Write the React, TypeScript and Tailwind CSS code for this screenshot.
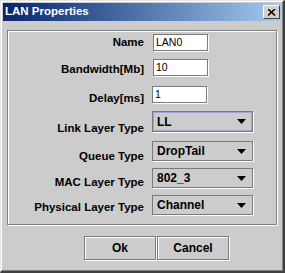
import React from 'react';

const font = { fontFamily: '"Liberation Sans", Arial, sans-serif' };

interface RowProps {
  label: string;
  mt: string;
  labelPt: string;
  children: React.ReactNode;
}

const Row: React.FC<RowProps> = ({ label, mt, labelPt, children }) => (
  <div className={`flex items-start ${mt}`}>
    <div
      className={`w-[136px] shrink-0 text-right text-[11.5px] font-bold leading-[14px] text-black ${labelPt}`}
    >
      {label}
    </div>
    <div className="ml-[9px]">{children}</div>
  </div>
);

const TextField: React.FC<{ value: string; shift?: boolean }> = ({ value, shift }) => (
  <div
    className={`h-[17px] w-[55px] border border-[#7a7a7a] bg-white pl-[2px] text-[10.5px] leading-[15px] text-black shadow-[1px_1px_0_#ffffff] ${
      shift ? '-ml-px' : ''
    }`}
  >
    {value}
  </div>
);

const Combo: React.FC<{ value: string; focused?: boolean; h: string }> = ({
  value,
  focused,
  h,
}) => (
  <div
    className={`${h} w-[101px] border border-[#7a7a7a] bg-[#cccccc] shadow-[1px_1px_0_#ffffff]`}
  >
    <div
      className={`flex h-full items-center justify-between pl-[3px] pr-[5px] ${
        focused ? 'border border-[#a3a3d6]' : 'border border-transparent'
      }`}
    >
      <span className="text-[12px] font-bold leading-[14px] text-black">{value}</span>
      <svg width="9" height="5" viewBox="0 0 9 5">
        <path d="M0 0 H9 L4.5 5 Z" fill="#000" />
      </svg>
    </div>
  </div>
);

const Button: React.FC<{ label: string }> = ({ label }) => (
  <div className="flex h-[24px] w-[72px] items-center justify-center border border-[#7a7a7a] text-[12px] font-bold text-black shadow-[inset_1px_1px_0_#ffffff,1px_1px_0_#ffffff]">
    {label}
  </div>
);

export default function App() {
  return (
    <div
      style={font}
      className="h-[273px] w-[285px] overflow-hidden bg-[#cccccc] border-t border-l border-t-[#e6e6e6] border-l-[#e6e6e6] border-r-2 border-b-2 border-r-[#404040] border-b-[#404040]"
    >
      <div className="h-full w-full border-t border-l border-t-white border-l-white border-r border-b border-r-[#808080] border-b-[#808080] px-px pt-px">
        {/* title bar */}
        <div className="flex h-[18px] items-center justify-between bg-gradient-to-r from-[#0a246a] to-[#a6caf0] pl-[2px] pr-[1px]">
          <span className="text-[11.5px] font-bold text-white">LAN Properties</span>
          <div className="flex h-[14px] w-[17px] items-center justify-center bg-[#d4d0c8] border-t border-l border-t-white border-l-white border-r border-b border-r-[#404040] border-b-[#404040]">
            <svg width="8" height="7" viewBox="0 0 8 7">
              <path d="M0 0 L7 6.5 M7 0 L0 6.5" stroke="#000" strokeWidth="1.6" />
            </svg>
          </div>
        </div>

        {/* content */}
        <div className="px-[4px] pt-[9px]">
          <div className="h-[195px] w-[270px] border border-[#808080] shadow-[1px_1px_0_#ffffff,inset_1px_1px_0_#ffffff] pt-[3px]">
            <Row label="Name" mt="mt-0" labelPt="pt-px">
              <TextField value="LAN0" />
            </Row>
            <Row label="Bandwidth[Mb]" mt="mt-[8px]" labelPt="pt-[3px]">
              <TextField value="10" />
            </Row>
            <Row label="Delay[ms]" mt="mt-[10px]" labelPt="pt-[5px]">
              <TextField value="1" shift />
            </Row>
            <Row label="Link Layer Type" mt="mt-[6px]" labelPt="pt-[10px]">
              <div className="-ml-px">
                <Combo value="LL" focused h="h-[21px]" />
              </div>
            </Row>
            <Row label="Queue Type" mt="mt-[6px]" labelPt="pt-[8px]">
              <div className="-ml-px">
                <Combo value="DropTail" h="h-[20px]" />
              </div>
            </Row>
            <Row label="MAC Layer Type" mt="mt-[5px]" labelPt="pt-[7px]">
              <div className="-ml-px">
                <Combo value="802_3" h="h-[20px]" />
              </div>
            </Row>
            <Row label="Physical Layer Type" mt="mt-[6px]" labelPt="pt-[5px]">
              <div className="-ml-px">
                <Combo value="Channel" h="h-[20px]" />
              </div>
            </Row>
          </div>

          <div className="mt-[11px] ml-[77px] flex gap-px">
            <Button label="Ok" />
            <Button label="Cancel" />
          </div>
        </div>
      </div>
    </div>
  );
}
